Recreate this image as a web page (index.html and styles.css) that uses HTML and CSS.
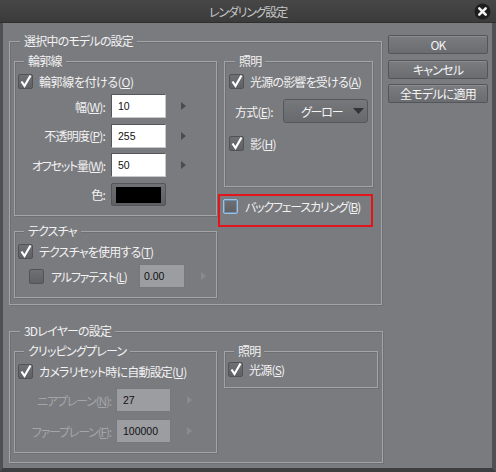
FILE: index.html
```html
<!DOCTYPE html>
<html lang="ja">
<head>
<meta charset="utf-8">
<link rel="stylesheet" href="styles.css">
</head>
<body>
<div class="window">
  <div class="titlebar">
    <span></span>
    <span class="title kt">レンダリング設定</span>
    <span class="close"><svg width="17" height="17" viewBox="0 0 17 17"><circle cx="8.5" cy="8.5" r="8" fill="#1e1e1e"/><path d="M5.3 5.3 L11.7 11.7 M11.7 5.3 L5.3 11.7" stroke="#f4f4f4" stroke-width="2.6" stroke-linecap="round"/></svg></span>
  </div>
  <div class="body">
    <div class="main">
      <div class="group g-model">
        <div class="legend">選択中のモデルの設定</div>
        <div class="cols">
          <div class="col-left">
            <div class="group g-outline">
              <div class="legend">輪郭線</div>
              <div class="check-row loose"><span class="cb checked"><svg width="15" height="15" viewBox="0 0 15 15"><path d="M3.5 7.5 L6.5 12 L12.5 1.5" fill="none" stroke="#fff" stroke-width="2.2"/></svg></span>輪郭線を付ける(<u>O</u>)</div>
              <div class="field-row"><span class="flabel">幅(<u>W</u>):</span><span class="input">10</span><span class="arrow"></span></div>
              <div class="field-row"><span class="flabel">不透明度(<u>P</u>):</span><span class="input">255</span><span class="arrow"></span></div>
              <div class="field-row"><span class="flabel kt">オフセット量(<u>W</u>):</span><span class="input">50</span><span class="arrow"></span></div>
              <div class="field-row"><span class="flabel">色:</span><span class="swatch"><span class="swatch-in"></span></span></div>
            </div>
            <div class="group g-texture">
              <div class="legend">テクスチャ</div>
              <div class="check-row"><span class="cb checked"><svg width="15" height="15" viewBox="0 0 15 15"><path d="M3.5 7.5 L6.5 12 L12.5 1.5" fill="none" stroke="#fff" stroke-width="2.2"/></svg></span>テクスチャを使用する(<u>T</u>)</div>
              <div class="alpha-row"><span class="cb"></span><span class="alabel kt">アルファテスト(<u>L</u>)</span><span class="input disabled small">0.00</span><span class="arrow faint"></span></div>
            </div>
          </div>
          <div class="col-right">
            <div class="group g-light">
              <div class="legend">照明</div>
              <div class="check-row"><span class="cb checked"><svg width="15" height="15" viewBox="0 0 15 15"><path d="M3.5 7.5 L6.5 12 L12.5 1.5" fill="none" stroke="#fff" stroke-width="2.2"/></svg></span>光源の影響を受ける(<u>A</u>)</div>
              <div class="mode-row"><span class="mlabel">方式(<u>E</u>):</span><span class="select kt">グーロー<svg class="tri" width="11" height="6" viewBox="0 0 11 6"><path d="M0 0 H11 L5.5 6 Z" fill="#333436"/></svg></span></div>
              <div class="check-row shadow-row"><span class="cb checked"><svg width="15" height="15" viewBox="0 0 15 15"><path d="M3.5 7.5 L6.5 12 L12.5 1.5" fill="none" stroke="#fff" stroke-width="2.2"/></svg></span>影(<u>H</u>)</div>
            </div>
            <div class="redbox">
              <div class="check-row kt"><span class="cb focus"></span>バックフェースカリング(<u>B</u>)</div>
            </div>
          </div>
        </div>
      </div>
      <div class="group g-layer">
        <div class="legend">3Dレイヤーの設定</div>
        <div class="cols">
          <div class="group g-clip">
            <div class="legend">クリッピングプレーン</div>
            <div class="check-row"><span class="cb checked"><svg width="15" height="15" viewBox="0 0 15 15"><path d="M3.5 7.5 L6.5 12 L12.5 1.5" fill="none" stroke="#fff" stroke-width="2.2"/></svg></span>カメラリセット時に自動設定(<u>U</u>)</div>
            <div class="field-row clip-row"><span class="flabel dim kt">ニアプレーン(<u>N</u>):</span><span class="input disabled">27</span><span class="arrow faint"></span></div>
            <div class="field-row clip-row"><span class="flabel dim kt">ファープレーン(<u>F</u>):</span><span class="input disabled">100000</span><span class="arrow faint"></span></div>
          </div>
          <div class="group g-light2">
            <div class="legend">照明</div>
            <div class="check-row"><span class="cb checked"><svg width="15" height="15" viewBox="0 0 15 15"><path d="M3.5 7.5 L6.5 12 L12.5 1.5" fill="none" stroke="#fff" stroke-width="2.2"/></svg></span>光源(<u>S</u>)</div>
          </div>
        </div>
      </div>
    </div>
    <div class="buttons">
      <div class="btn">OK</div>
      <div class="btn">キャンセル</div>
      <div class="btn">全モデルに適用</div>
    </div>
  </div>
</div>
</body>
</html>
```
FILE: styles.css
```css
* { box-sizing: border-box; }
html, body { margin: 0; padding: 0; }
body {
  width: 496px;
  height: 472px;
  overflow: hidden;
  font-family: "Noto Sans CJK JP", "Noto Sans", sans-serif;
  font-size: 12px;
  font-feature-settings: "palt";
  letter-spacing: -0.8px;
  color: #f2f2f2;
  background: #7a7b7f;
}
.kt { letter-spacing: -1.2px; }
.loose { letter-spacing: -0.4px; }
u { text-decoration: underline; text-underline-offset: 1px; }

.window { width: 496px; height: 472px; display: flex; flex-direction: column; }

.titlebar {
  height: 23px;
  display: grid;
  grid-template-columns: 1fr auto 1fr;
  align-items: center;
  background: linear-gradient(#474747, #3b3b3b);
  border-bottom: 1px solid #2f2f2f;
}
.title { color: #c6c6c6; font-size: 12px; line-height: 23px; }
.close { justify-self: end; margin-right: 5px; height: 17px; }
.close svg { display: block; }

.body {
  flex: 1;
  display: flex;
  background: #7a7b7f;
  border-left: 3px solid #4f5052;
  border-right: 4px solid #4f5052;
  border-bottom: 4px solid #3e3e40;
}

.main { margin-left: 6px; margin-top: 18px; width: 374px; }

.group {
  --pt: 12px;
  border: 1px solid #a3a4a7;
  box-shadow: inset 1px 1px 0 #6f7074, 1px 1px 0 #6f7074;
}
.legend {
  width: max-content;
  height: 14px;
  line-height: 14px;
  margin: -8px 0 calc(var(--pt) - 6px) 6px;
  padding: 0 4px;
  background: #7a7b7f;
  color: #f2f2f2;
}

.cols { display: flex; }

.g-model { --pt: 19px; width: 373px; height: 264px; padding-left: 4px; }
.col-left { width: 203px; }
.col-right { width: 155px; margin-left: 1px; }

.g-outline { --pt: 12px; height: 155px; padding-left: 3px; }
.g-texture { --pt: 12px; height: 67px; margin-top: 15px; padding-left: 3px; }

.check-row {
  display: flex;
  align-items: center;
  height: 15px;
  line-height: 15px;
  white-space: nowrap;
}
.cb {
  width: 15px;
  height: 15px;
  flex: none;
  margin-right: 6px;
  border: 1px solid #525356;
  border-radius: 2px;
  background: linear-gradient(#6f7074, #606165);
  position: relative;
}
.cb svg { position: absolute; left: -1px; top: -1px; }
.cb.focus { border-color: #9cc3e6; box-shadow: inset 0 0 0 1px #6d8fb0; }

.field-row { display: flex; align-items: center; height: 24px; margin-top: 5.67px; }
.check-row + .field-row { margin-top: 5px; }
.flabel { width: 87px; text-align: right; margin-right: 6px; white-space: nowrap; }
.flabel.dim { color: #a4a5a8; }
.input {
  width: 55px;
  height: 24px;
  background: #ffffff;
  border: 1px solid #55565a;
  border-right-color: #c9c9cb;
  border-bottom-color: #c9c9cb;
  color: #111;
  font-family: "Liberation Sans", Arial, sans-serif;
  font-size: 10.5px;
  letter-spacing: 0;
  line-height: 22px;
  padding-left: 6px;
}
.input.disabled { background: #9c9da1; border-color: #77787b; }
.input.small { width: 46px; padding-left: 4px; }
.arrow {
  width: 0; height: 0;
  margin-left: 15px;
  border-top: 4px solid transparent;
  border-bottom: 4px solid transparent;
  border-left: 5px solid #4a4b4f;
}
.arrow.faint { border-left-color: #8a8b8f; }

.swatch {
  width: 55px;
  height: 23px;
  border: 1px solid #55565a;
  border-radius: 2px;
  background: linear-gradient(#707175, #5f6064);
  padding: 3px 4px 2px 4px;
  display: flex;
}
.swatch-in { flex: 1; background: #000; }

.alpha-row { display: flex; align-items: center; height: 24px; margin-top: 5px; padding-left: 11px; }
.alpha-row .cb { margin-right: 7px; }
.alabel { width: 88px; white-space: nowrap; }
.alpha-row .arrow { margin-left: 16px; }

.g-light { --pt: 12px; width: 149px; height: 126px; margin-left: 6px; padding-left: 4px; }
.mode-row { display: flex; align-items: center; height: 24px; margin-top: 10px; padding-left: 6px; }
.mlabel { width: 48px; white-space: nowrap; }
.select {
  width: 85px;
  height: 24px;
  display: flex;
  align-items: center;
  padding-left: 17px;
  border: 1px solid #56575b;
  border-radius: 3px;
  background: linear-gradient(#77787c, #68696d);
  color: #f4f4f4;
}
.tri { margin-left: auto; margin-right: 3px; }
.shadow-row { margin-top: 13px; }

.redbox {
  width: 155px;
  height: 33px;
  margin-top: 7px;
  border: 2px solid #e3141b;
  padding: 3px 0 0 3px;
}
.redbox .cb { margin-right: 7px; }

.g-layer { --pt: 19px; width: 374px; height: 132px; margin-top: 26px; padding-left: 4px; }
.g-clip { --pt: 12px; width: 203px; height: 102px; padding-left: 3px; }
.clip-row .flabel { width: 93px; margin-right: 5px; }
.clip-row .arrow { margin-left: 16px; }
.g-clip .check-row + .field-row { margin-top: 9px; }
.g-clip .field-row + .field-row { margin-top: 7px; }
.g-light2 { --pt: 10px; width: 154px; height: 37px; margin-left: 7px; padding-left: 3px; }

.buttons { margin-left: 5px; margin-top: 12px; width: 100px; display: flex; flex-direction: column; gap: 5.5px; }
.btn {
  height: 19px;
  line-height: 17px;
  text-align: center;
  border: 1px solid #545559;
  border-radius: 2px;
  background: linear-gradient(#7b7c80, #6b6c70);
  box-shadow: inset 0 1px 0 #8c8d91;
  color: #f4f4f4;
  white-space: nowrap;
}
```
